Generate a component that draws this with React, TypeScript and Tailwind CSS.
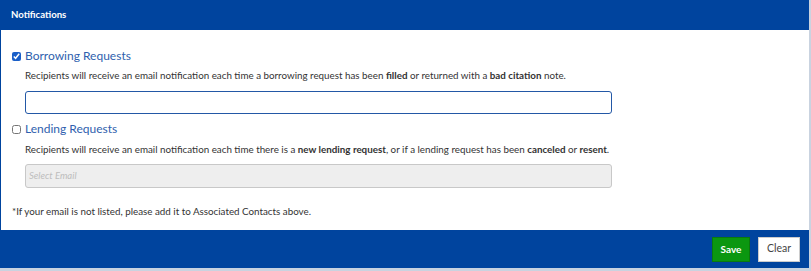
import React from "react";

export default function App() {
  return (
    <div className="w-[811px] h-[271px] bg-[#c9d3e0] font-['Lato','Open_Sans',sans-serif] text-[#333] overflow-hidden">
      <div className="w-[809px] h-[268px] flex flex-col border-l border-[#00449e] bg-[#00449e]">
        <div className="h-[30px] flex items-center pl-[10px] text-white text-[9.6px] font-bold">
          Notifications
        </div>
        <div className="h-[200px] bg-white flex flex-col pl-[11px] pt-[18px]">
          <label className="flex items-center h-[16px]">
            <input type="checkbox" defaultChecked className="w-[9px] h-[9px] m-0 accent-[#1a5fc8]" />
            <span className="ml-[4px] text-[12px] text-[#2f5fae]">Borrowing Requests</span>
          </label>
          <div className="mt-[4px] ml-[13px] text-[9.8px] h-[14px] leading-[14px]">
            Recipients will receive an email notification each time a borrowing request has been <b>filled</b> or returned with a <b>bad citation</b> note.
          </div>
          <div className="mt-[9px] ml-[13px] w-[587px] h-[23px] border border-[#2358a6] rounded-[3px] bg-white" />
          <label className="flex items-center h-[16px] mt-[7px]">
            <input type="checkbox" className="w-[9px] h-[9px] m-0" />
            <span className="ml-[4px] text-[12px] text-[#2f5fae]">Lending Requests</span>
          </label>
          <div className="mt-[5px] ml-[13px] text-[9.8px] h-[14px] leading-[14px]">
            Recipients will receive an email notification each time there is a <b>new lending request</b>, or if a lending request has been <b>canceled</b> or <b>resent</b>.
          </div>
          <div className="mt-[8px] ml-[13px] w-[587px] h-[24px] border border-[#c8c8c8] rounded-[3px] bg-[#eeeeee] flex items-center pl-[3px] text-[9.5px] italic text-[#bdbdbd]">
            Select Email
          </div>
          <div className="mt-[16px] text-[9.8px] h-[14px] leading-[14px]">
            *If your email is not listed, please add it to Associated Contacts above.
          </div>
        </div>
        <div className="flex-1 flex items-center justify-end pr-[9px] gap-[8px]">
          <button className="h-[25px] w-[38px] bg-[#0b9710] border border-[#0a7a0e] text-white text-[10px] font-bold">Save</button>
          <button className="h-[25px] w-[42px] bg-white border border-[#ccc] text-[#444] text-[10.5px]">Clear</button>
        </div>
      </div>
    </div>
  );
}
